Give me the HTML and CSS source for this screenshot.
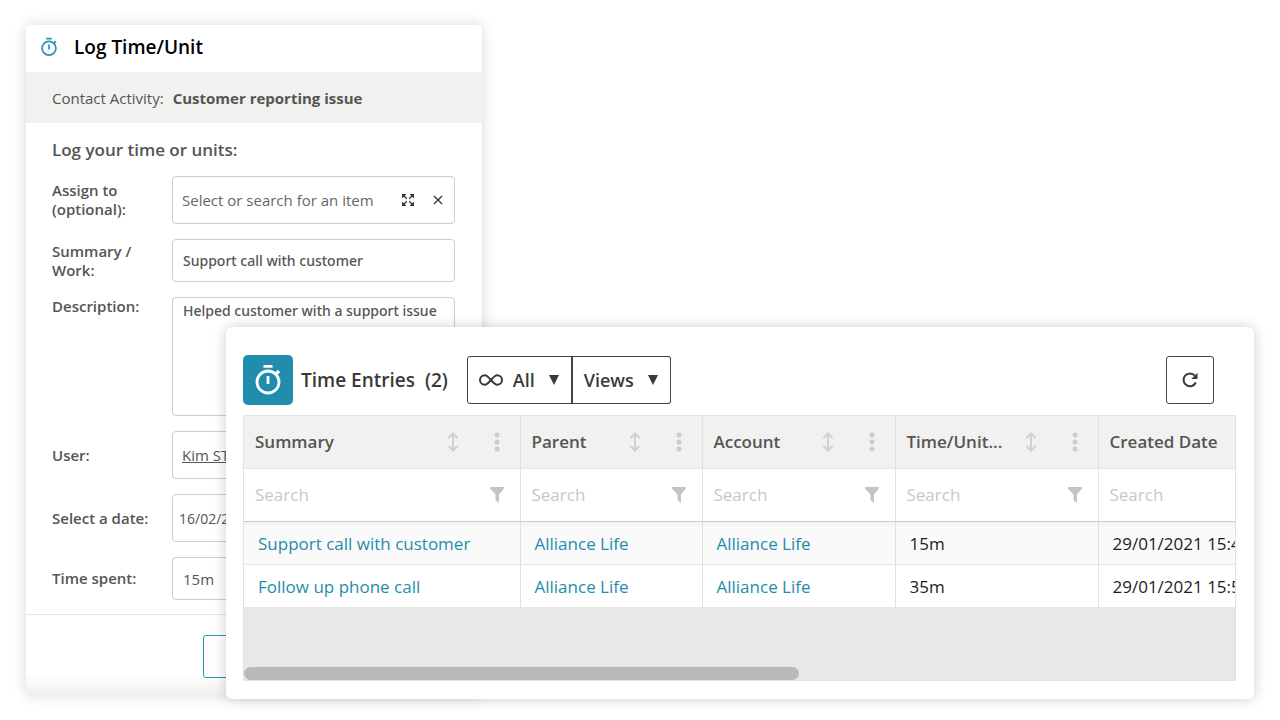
FILE: index.html
```html
<!DOCTYPE html>
<html lang="en">
<head>
    <meta charset="UTF-8">
    <meta name="viewport" content="width=device-width, initial-scale=1.0">
    <title>Log Time/Unit</title>
    <link rel="stylesheet" href="styles.css">
</head>
<body>
    <svg class="sprite" aria-hidden="true">
        <symbol id="stopwatch" viewBox="0 0 28 32">
            <circle cx="14" cy="18" r="11" fill="none" stroke="currentColor" stroke-width="2.800"/>
            <path d="M9.500 1h9v2.800h-9zM12.600 12h2.800v8h-2.800z" fill="currentColor"/>
            <path d="M22 10l3-3" stroke="currentColor" stroke-width="3.200"/>
        </symbol>
        <symbol id="sort" viewBox="0 0 12 20">
            <path d="M6 2v16M2 5.500L6 1.500l4 4M2 14.500l4 4 4-4" fill="none" stroke="currentColor" stroke-width="2" stroke-linecap="round"/>
        </symbol>
        <symbol id="dots" viewBox="0 0 6 20">
            <circle cx="3" cy="3" r="2.500" fill="currentColor"/>
            <circle cx="3" cy="10" r="2.500" fill="currentColor"/>
            <circle cx="3" cy="17" r="2.500" fill="currentColor"/>
        </symbol>
        <symbol id="funnel" viewBox="0 0 14 16">
            <path d="M0 0h14v1.500L9 7.500V16L5.500 13V7.500L0 1.500z" fill="currentColor"/>
        </symbol>
    </svg>

    <main class="stage">
        <form class="log-card">
            <header class="log-header">
                <svg class="log-icon"><use href="#stopwatch"/></svg>
                <h1>Log Time/Unit</h1>
            </header>
            <div class="log-context">
                <span>Contact Activity:</span>
                <strong>Customer reporting issue</strong>
            </div>
            <div class="log-body">
                <h2>Log your time or units:</h2>
                <div class="row">
                    <label for="assign">Assign to (optional):</label>
                    <div class="field tall">
                        <input type="text" id="assign" placeholder="Select or search for an item">
                        <button type="button" class="icon-btn" aria-label="Expand">
                            <svg class="expand" viewBox="0 0 12 12">
                                <path d="M0 0h4.500L0 4.500zM12 0H7.500L12 4.500zM0 12h4.500L0 7.500zM12 12H7.500L12 7.500z" fill="currentColor"/>
                                <path d="M1 1l3.800 3.800M11 1L7.200 4.800M1 11l3.800-3.800M11 11L7.200 7.200" stroke="currentColor" stroke-width="1.300"/>
                            </svg>
                        </button>
                        <button type="button" class="icon-btn" aria-label="Clear">
                            <svg class="clear" viewBox="0 0 10 10"><path d="M1 1l8 8M9 1L1 9" stroke="currentColor" stroke-width="1.300"/></svg>
                        </button>
                    </div>
                </div>
                <div class="row">
                    <label for="summary">Summary / Work:</label>
                    <div class="field medium"><input type="text" id="summary" value="Support call with customer"></div>
                </div>
                <div class="row top">
                    <label for="description">Description:</label>
                    <textarea class="field medium" id="description">Helped customer with a support issue</textarea>
                </div>
                <div class="row">
                    <span class="label">User:</span>
                    <div class="field tall"><a href="#">Kim ST</a></div>
                </div>
                <div class="row">
                    <label for="date">Select a date:</label>
                    <div class="field tall date"><input type="text" id="date" value="16/02/2021"></div>
                </div>
                <div class="row">
                    <label for="spent">Time spent:</label>
                    <div class="field"><input type="text" id="spent" value="15m"></div>
                </div>
            </div>
            <footer class="log-footer">
                <button type="button">Cancel</button>
                <button type="button">Save</button>
            </footer>
        </form>

        <section class="entries-card">
            <header class="entries-header">
                <span class="entries-icon"><svg><use href="#stopwatch"/></svg></span>
                <h2>Time Entries <span>(2)</span></h2>
                <div class="btn-group">
                    <button type="button">
                        <svg class="infinity" viewBox="0 0 24 12"><path d="M12 6C9.500 3 8 1.200 5.800 1.200a4.800 4.800 0 0 0 0 9.600C8 10.800 9.500 9 12 6s4-4.800 6.200-4.800a4.800 4.800 0 0 1 0 9.600C16 10.800 14.500 9 12 6z" fill="none" stroke="currentColor" stroke-width="2"/></svg>
                        All
                        <svg class="caret" viewBox="0 0 10 10"><path d="M0 0h10L5 10z" fill="currentColor"/></svg>
                    </button>
                    <button type="button">
                        Views
                        <svg class="caret" viewBox="0 0 10 10"><path d="M0 0h10L5 10z" fill="currentColor"/></svg>
                    </button>
                </div>
                <button type="button" class="refresh" aria-label="Refresh">
                    <svg viewBox="0 0 16 16"><path d="M13.800 10.500A6.400 6.400 0 1 1 12.800 3.600" fill="none" stroke="currentColor" stroke-width="2"/><path d="M15.500.8V7H9.300z" fill="currentColor"/></svg>
                </button>
            </header>

            <div class="table-wrap">
                <table>
                    <colgroup>
                        <col class="col-summary">
                        <col class="col-parent">
                        <col class="col-account">
                        <col class="col-time">
                        <col class="col-created">
                    </colgroup>
                    <thead>
                        <tr>
                            <th><div class="head"><span>Summary</span><svg class="sort"><use href="#sort"/></svg><svg class="dots"><use href="#dots"/></svg></div></th>
                            <th><div class="head"><span>Parent</span><svg class="sort"><use href="#sort"/></svg><svg class="dots"><use href="#dots"/></svg></div></th>
                            <th><div class="head"><span>Account</span><svg class="sort"><use href="#sort"/></svg><svg class="dots"><use href="#dots"/></svg></div></th>
                            <th><div class="head"><span>Time/Unit...</span><svg class="sort"><use href="#sort"/></svg><svg class="dots"><use href="#dots"/></svg></div></th>
                            <th><div class="head"><span>Created Date</span></div></th>
                        </tr>
                        <tr class="filters">
                            <td><div class="head"><input type="text" placeholder="Search" aria-label="Search summary"><svg class="funnel"><use href="#funnel"/></svg></div></td>
                            <td><div class="head"><input type="text" placeholder="Search" aria-label="Search parent"><svg class="funnel"><use href="#funnel"/></svg></div></td>
                            <td><div class="head"><input type="text" placeholder="Search" aria-label="Search account"><svg class="funnel"><use href="#funnel"/></svg></div></td>
                            <td><div class="head"><input type="text" placeholder="Search" aria-label="Search time"><svg class="funnel"><use href="#funnel"/></svg></div></td>
                            <td><div class="head"><input type="text" placeholder="Search" aria-label="Search created date"></div></td>
                        </tr>
                    </thead>
                    <tbody>
                        <tr>
                            <td><a href="#">Support call with customer</a></td>
                            <td><a href="#">Alliance Life</a></td>
                            <td><a href="#">Alliance Life</a></td>
                            <td>15m</td>
                            <td>29/01/2021 15:45</td>
                        </tr>
                        <tr>
                            <td><a href="#">Follow up phone call</a></td>
                            <td><a href="#">Alliance Life</a></td>
                            <td><a href="#">Alliance Life</a></td>
                            <td>35m</td>
                            <td>29/01/2021 15:52</td>
                        </tr>
                    </tbody>
                </table>
                <div class="scrollbar"><div class="thumb"></div></div>
            </div>
        </section>
    </main>
</body>
</html>
```
FILE: styles.css
```css
* {
    box-sizing: border-box;
}
body {
    margin: 0;
    font-family: "Open Sans", "Noto Sans", sans-serif;
    font-size: 15px;
    color: #555;
    background: #fff;
}
h1, h2 {
    margin: 0;
    font-weight: 600;
}
button, input, textarea {
    font: inherit;
    color: inherit;
}
button {
    background: none;
    cursor: pointer;
}
.sprite {
    position: absolute;
    width: 0;
    height: 0;
}
.stage {
    position: relative;
    padding: 25px 26px 24px;
}

/* Log form */
.log-card {
    max-width: 456px;
    background: #fff;
    border-radius: 4px;
    box-shadow: 0 0 14px rgba(0, 0, 0, 0.16);
}
.log-header {
    display: flex;
    align-items: center;
    gap: 16px;
    height: 47px;
    padding: 0 14px 3px;
}
.log-header h1 {
    font-size: 19px;
    color: #000;
}
.log-icon {
    width: 18px;
    height: 20px;
    color: #2b93b3;
}
.log-context {
    display: flex;
    align-items: center;
    gap: 9px;
    height: 51px;
    padding: 0 26px;
    background: #f1f1ef;
}
.log-body {
    display: flex;
    flex-direction: column;
    gap: 15px;
    padding: 15px 27px 14px 26px;
}
.log-body h2 {
    font-size: 17px;
    line-height: 23px;
}
.row {
    display: grid;
    grid-template-columns: 102px minmax(0, 1fr);
    column-gap: 18px;
    align-items: center;
}
.row label, .row .label {
    font-weight: 600;
    line-height: 19px;
}
.row.top {
    align-items: start;
}
.field {
    display: flex;
    align-items: center;
    width: 100%;
    height: 43px;
    padding: 0 10px;
    border: 1px solid #ccc;
    border-radius: 4px;
}
.field.tall {
    height: 48px;
    padding: 0 9px;
}
.field.tall.date {
    padding: 0 6px;
    font-size: 14px;
}
.field input {
    flex: 1;
    min-width: 0;
    padding: 0;
    border: none;
    outline: none;
    background: none;
}
.field input::placeholder {
    color: #666;
    opacity: 1;
}
.field a {
    color: inherit;
}
.field.medium {
    font-family: "Noto Sans", sans-serif;
    font-size: 14px;
    font-weight: 500;
}
textarea.field {
    height: 119px;
    padding: 3px 10px;
    line-height: 19px;
    resize: none;
}
.icon-btn {
    display: flex;
    padding: 0;
    margin-left: 19px;
    border: none;
    color: #333;
}
.expand {
    width: 12px;
    height: 12px;
}
.clear {
    width: 10px;
    height: 10px;
    margin-right: 2px;
}
.log-footer {
    display: flex;
    justify-content: flex-end;
    gap: 12px;
    padding: 20px 27px 17px;
    border-top: 1px solid #e4e4e4;
    border-radius: 0 0 4px 4px;
    background: linear-gradient(#fff 75%, #efefed);
}
.log-footer button {
    width: 120px;
    height: 43px;
    border: 1px solid #2b93b3;
    border-radius: 3px;
    color: #2b93b3;
}

/* Time entries panel, overlaps the form */
.entries-card {
    position: absolute;
    top: 327px;
    left: 226px;
    right: 26px;
    padding: 28px 18px 18px 17px;
    background: #fff;
    border-radius: 6px;
    box-shadow: 0 0 14px rgba(0, 0, 0, 0.2);
}
.entries-header {
    display: flex;
    align-items: center;
    padding-right: 22px;
    margin-bottom: 10px;
    color: #3a3a3a;
}
.entries-icon {
    display: flex;
    align-items: center;
    justify-content: center;
    width: 50px;
    height: 50px;
    border-radius: 5px;
    background: #1f8dab;
    color: #fff;
}
.entries-icon svg {
    width: 28px;
    height: 32px;
}
.entries-header h2 {
    margin: 0 19px 0 8px;
    font-size: 19px;
}
.entries-header h2 span {
    margin-left: 5px;
}
.btn-group {
    display: flex;
}
.btn-group button {
    display: flex;
    align-items: center;
    height: 48px;
    padding: 0 12px 0 11px;
    border: 1px solid #444;
    border-radius: 3px 0 0 3px;
    font-size: 18px;
    font-weight: 600;
}
.btn-group button + button {
    margin-left: -1px;
    border-left-width: 2px;
    border-radius: 0 3px 3px 0;
}
.infinity {
    width: 24px;
    height: 12px;
    margin-right: 10px;
}
.caret {
    width: 10px;
    height: 10px;
    margin-left: 14px;
}
.refresh {
    display: flex;
    align-items: center;
    justify-content: center;
    width: 48px;
    height: 48px;
    margin-left: auto;
    border: 1px solid #444;
    border-radius: 3px;
}
.refresh svg {
    width: 16px;
    height: 16px;
}
.table-wrap {
    overflow: hidden;
    border: 1px solid #e2e2e2;
    background: #e8e8e8;
}
table {
    width: 1120px;
    table-layout: fixed;
    border-collapse: collapse;
    font-size: 17px;
    color: #1c1c1c;
}
.col-summary {
    width: 276px;
}
.col-parent {
    width: 182px;
}
.col-account {
    width: 193px;
}
.col-time {
    width: 203px;
}
th, td {
    padding: 1px 14px 0;
    border-right: 1px solid #e0e0e0;
    border-bottom: 1px solid #e6e6e6;
    text-align: left;
    white-space: nowrap;
}
th, .filters td {
    height: 53px;
    padding: 0 16px 0 11px;
}
th {
    height: 52px;
    background: #f1f1ef;
    color: #555;
    font-weight: 600;
}
.filters td {
    background: #fff;
    border-bottom: 1px solid #ccc;
}
.head {
    display: flex;
    align-items: center;
}
.head span {
    flex: 1;
}
.sort {
    width: 12px;
    height: 20px;
    margin-right: 35px;
    color: #d0d0d0;
}
.dots {
    width: 6px;
    height: 20px;
    margin-right: 4px;
    color: #ccc;
}
.head input {
    flex: 1;
    min-width: 0;
    padding: 0;
    border: none;
    outline: none;
    background: none;
}
.head input::placeholder {
    color: #c8c8c8;
    opacity: 1;
}
.funnel {
    width: 14px;
    height: 16px;
    color: #c4c4c4;
}
tbody td {
    height: 43px;
    background: #fff;
}
tbody tr:first-child td {
    background: linear-gradient(#f3f3f3, #fafafa 6px);
}
tbody a {
    color: #1f8dab;
    text-decoration: none;
}
.scrollbar {
    padding-top: 59px;
}
.thumb {
    width: 56%;
    height: 13px;
    border-radius: 7px;
    background: #b9b9b9;
}
```
